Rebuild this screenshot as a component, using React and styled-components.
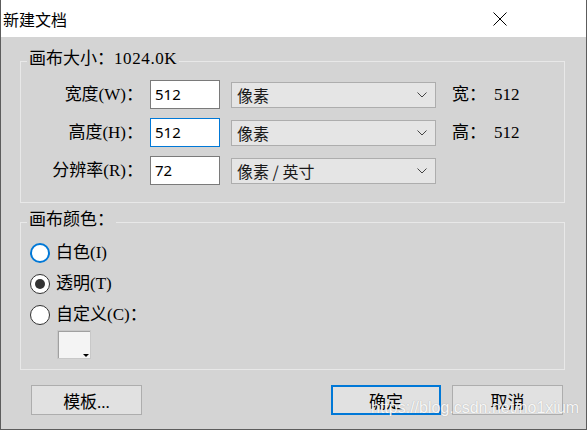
import React from "react";
import styled, { createGlobalStyle } from "styled-components";

const SERIF = `"Liberation Serif", "Noto Sans CJK SC", serif`;
const SANS = `"Noto Sans", "Noto Sans CJK SC", sans-serif`;

const Global = createGlobalStyle`
  html, body { margin: 0; padding: 0; background: #d4d4d4; }
  * { box-sizing: border-box; }
`;

const Window = styled.div`
  position: relative;
  width: 587px;
  height: 430px;
  background: #d4d4d4;
  border: 1px solid #5c5c5c;
  border-top: none;
  display: flex;
  flex-direction: column;
  font-family: ${SERIF};
  font-size: 17px;
  color: #000;
  overflow: hidden;
`;

const TitleBar = styled.div`
  height: 37px;
  flex: none;
  background: #fff;
  display: flex;
  align-items: center;
  justify-content: space-between;
  padding-left: 2px;
`;

const Title = styled.div`
  font-family: "Noto Sans CJK SC", sans-serif;
  font-size: 16px;
  line-height: 20px;
  color: #000;
`;

const CloseButton = styled.div`
  width: 46px;
  height: 37px;
  margin-right: 63px;
  display: flex;
  align-items: center;
  justify-content: center;
`;

const Body = styled.div`
  padding: 11px 21px 0 19px;
  display: flex;
  flex-direction: column;
`;

const Group = styled.fieldset`
  margin: ${(p) => p.$top}px 0 0;
  padding: 0;
  border: 1px solid #e8e8e8;
  min-width: 0;
`;

const Legend = styled.legend`
  margin-left: 6px;
  padding: 0 2px 4px;
  line-height: 22px;
  font-size: 17px;
`;

const Latin = styled.span`
  letter-spacing: 0.6px;
`;

const Rows = styled.div`
  display: flex;
  flex-direction: column;
  gap: 9px;
  padding: 6px 0 17px;
`;

const Row = styled.div`
  display: flex;
  align-items: center;
  height: 29px;
`;

const Label = styled.div`
  width: 122px;
  text-align: right;
  white-space: nowrap;
  line-height: 22px;
`;

const Input = styled.div`
  width: 70px;
  height: 29px;
  margin-left: 7px;
  background: #fff;
  border: 1px solid ${(p) => (p.$focused ? "#0078d7" : "#7a7a7a")};
  font-family: ${SANS};
  font-size: 15px;
  line-height: 27px;
  padding-left: 4px;
  color: #000;
`;

const Select = styled.div`
  width: 205px;
  height: 26px;
  margin-left: 11px;
  background: #e5e5e5;
  border: 1px solid #adadad;
  display: flex;
  align-items: center;
  justify-content: space-between;
  padding: 0 8px 0 5px;
  font-family: "Noto Sans CJK SC", sans-serif;
  font-size: 16px;
  color: #1a1a1a;
`;

const Info = styled.div`
  margin-left: 16px;
  white-space: nowrap;
  line-height: 22px;
`;

const Num = styled.span`
  margin-left: 8px;
`;

const RadioList = styled.div`
  display: flex;
  flex-direction: column;
  padding: 2px 0 10px 9px;
`;

const RadioRow = styled.div`
  display: flex;
  align-items: center;
  height: 31px;
`;

const RadioCircle = styled.div`
  width: 20px;
  height: 20px;
  border-radius: 50%;
  background: #fff;
  border: ${(p) => (p.$focused ? "2px solid #0078d7" : "1px solid #333")};
  display: flex;
  align-items: center;
  justify-content: center;
  flex: none;
`;

const RadioDot = styled.div`
  width: 10px;
  height: 10px;
  border-radius: 50%;
  background: #333;
`;

const RadioLabel = styled.div`
  margin-left: 6px;
  line-height: 22px;
`;

const Swatch = styled.div`
  position: relative;
  width: 34px;
  height: 29px;
  margin-left: 27px;
  background: #f4f4f4;
  border: 1px solid #fafafa;
  box-shadow: inset 1px 1px 0 #a0a0a0;
  outline: 1px solid #c8c8c8;
  outline-offset: -1px;
  &::after {
    content: "";
    position: absolute;
    right: 1px;
    bottom: 1px;
    border-left: 3px solid transparent;
    border-right: 3px solid transparent;
    border-top: 3px solid #000;
  }
`;

const ButtonRow = styled.div`
  margin-top: 15px;
  display: flex;
  justify-content: space-between;
  padding: 0 2px 0 11px;
`;

const ButtonGroup = styled.div`
  display: flex;
  gap: 11px;
`;

const Button = styled.div`
  width: ${(p) => p.$w || 110}px;
  height: 30px;
  background: #e1e1e1;
  border: ${(p) => (p.$primary ? "2px solid #0078d7" : "1px solid #adadad")};
  display: flex;
  align-items: center;
  justify-content: center;
  font-size: 17px;
  color: #000;
`;

const Watermark = styled.div`
  position: absolute;
  left: 370px;
  top: 399px;
  font-family: "Liberation Sans", Arial, sans-serif;
  font-size: 16px;
  line-height: 18px;
  color: rgba(255, 255, 255, 0.92);
  text-shadow: 0 0 1px rgba(90, 90, 90, 0.45);
  white-space: nowrap;
  pointer-events: none;
`;

const Chevron = () => (
  <svg width="10" height="6" viewBox="0 0 10 6">
    <path d="M0.5 0.5 L5 5 L9.5 0.5" fill="none" stroke="#444" strokeWidth="1" />
  </svg>
);

const rows = [
  { label: "宽度(W)：", value: "512", unit: "像素", info: "宽：", num: "512" },
  { label: "高度(H)：", value: "512", unit: "像素", info: "高：", num: "512", focused: true },
  { label: "分辨率(R)：", value: "72", unit: "像素 / 英寸" },
];

const radios = [
  { label: "白色(I)", focused: true },
  { label: "透明(T)", checked: true },
  { label: "自定义(C)：" },
];

export default function App() {
  return (
    <>
      <Global />
      <Window>
        <TitleBar>
          <Title>新建文档</Title>
          <CloseButton>
            <svg width="14" height="14" viewBox="0 0 14 14">
              <path d="M0.5 0.5 L13.5 13.5 M13.5 0.5 L0.5 13.5" stroke="#000" strokeWidth="1" />
            </svg>
          </CloseButton>
        </TitleBar>
        <Body>
          <Group $top={0}>
            <Legend>
              画布大小：<Latin>1024.0K</Latin>
            </Legend>
            <Rows>
              {rows.map((r) => (
                <Row key={r.label}>
                  <Label>{r.label}</Label>
                  <Input $focused={r.focused}>{r.value}</Input>
                  <Select>
                    <span>{r.unit}</span>
                    <Chevron />
                  </Select>
                  {r.info && (
                    <Info>
                      {r.info}
                      <Num>{r.num}</Num>
                    </Info>
                  )}
                </Row>
              ))}
            </Rows>
          </Group>
          <Group $top={6}>
            <Legend>画布颜色：</Legend>
            <RadioList>
              {radios.map((r) => (
                <RadioRow key={r.label}>
                  <RadioCircle $focused={r.focused}>{r.checked && <RadioDot />}</RadioCircle>
                  <RadioLabel>{r.label}</RadioLabel>
                </RadioRow>
              ))}
              <Swatch />
            </RadioList>
          </Group>
          <ButtonRow>
            <Button $w={111}>模板...</Button>
            <ButtonGroup>
              <Button $primary>确定</Button>
              <Button $w={111}>取消</Button>
            </ButtonGroup>
          </ButtonRow>
        </Body>
        <Watermark>https://blog.csdn.net/no1xium</Watermark>
      </Window>
    </>
  );
}
